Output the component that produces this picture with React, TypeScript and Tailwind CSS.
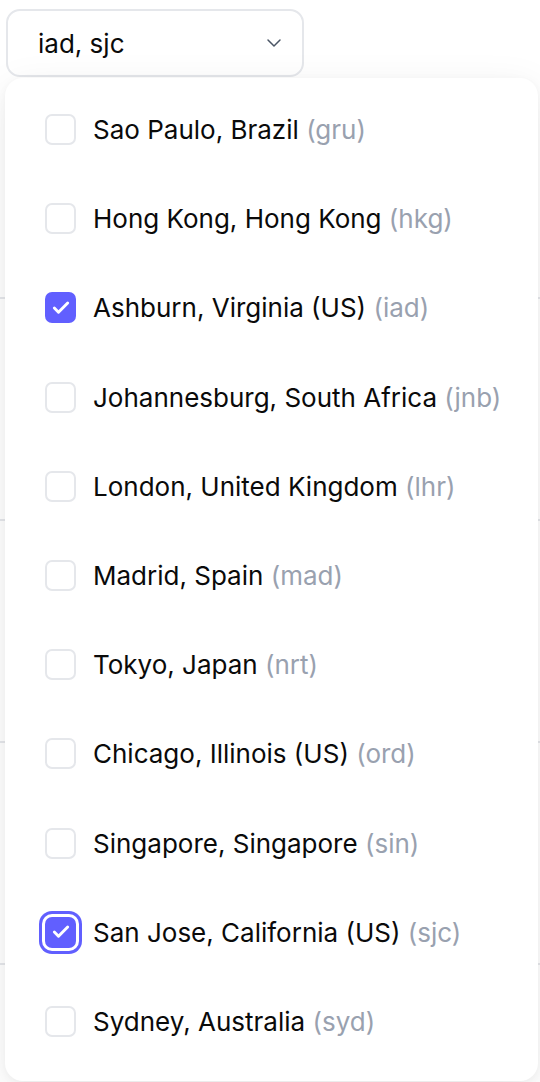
import React, { useState } from 'react';
import { ChevronDown, Check } from 'lucide-react';

const regions = [
  { name: 'Sao Paulo, Brazil', code: 'gru' },
  { name: 'Hong Kong, Hong Kong', code: 'hkg' },
  { name: 'Ashburn, Virginia (US)', code: 'iad' },
  { name: 'Johannesburg, South Africa', code: 'jnb' },
  { name: 'London, United Kingdom', code: 'lhr' },
  { name: 'Madrid, Spain', code: 'mad' },
  { name: 'Tokyo, Japan', code: 'nrt' },
  { name: 'Chicago, Illinois (US)', code: 'ord' },
  { name: 'Singapore, Singapore', code: 'sin' },
  { name: 'San Jose, California (US)', code: 'sjc' },
  { name: 'Sydney, Australia', code: 'syd' },
];

export default function App() {
  const [selected, setSelected] = useState<string[]>(['iad', 'sjc']);
  const focused = 'sjc';

  const toggle = (code: string) => {
    setSelected((prev) =>
      prev.includes(code) ? prev.filter((c) => c !== code) : [...prev, code]
    );
  };

  return (
    <div
      className="relative w-[540px] h-[1082px] overflow-hidden bg-white text-[#0a0a0a]"
      style={{ fontFamily: 'Inter, "Noto Sans", sans-serif' }}
    >
      {/* Table rows behind the menu */}
      <div className="pt-[77px]">
        {[0, 1, 2, 3].map((i) => (
          <div key={i} className="h-[222px] border-b-2 border-gray-200" />
        ))}
      </div>

      {/* Trigger */}
      <button className="absolute left-[6px] top-[9px] w-[298px] h-[68px] flex items-center justify-between pl-[30px] pr-[16px] bg-white border-2 border-gray-200 rounded-[14px] text-[26px]">
        <span>{selected.join(', ')}</span>
        <ChevronDown className="w-[24px] h-[24px] text-gray-600" strokeWidth={1.5} />
      </button>

      {/* Menu */}
      <div className="absolute left-[5px] top-[78px] w-[533px] h-[1003px] bg-white rounded-[18px] shadow-[0_10px_40px_rgba(0,0,0,0.08),0_2px_8px_rgba(0,0,0,0.04)] pt-[7px]">
        {regions.map((r) => {
          const checked = selected.includes(r.code);
          const isFocused = r.code === focused;
          return (
            <div
              key={r.code}
              onClick={() => toggle(r.code)}
              className="h-[89.2px] flex items-center pl-[40px] gap-[17px] cursor-pointer"
            >
              <span
                className={
                  'w-[31px] h-[31px] shrink-0 rounded-[7px] flex items-center justify-center ' +
                  (checked ? 'bg-indigo-500' : 'border-2 border-gray-200 bg-white') +
                  (isFocused ? ' ring-[3px] ring-indigo-500 ring-offset-[3px] ring-offset-white' : '')
                }
              >
                {checked && <Check className="w-[20px] h-[20px] text-white" strokeWidth={3.5} />}
              </span>
              <span className="text-[26px] whitespace-nowrap">
                {r.name} <span className="text-gray-400">({r.code})</span>
              </span>
            </div>
          );
        })}
      </div>
    </div>
  );
}
